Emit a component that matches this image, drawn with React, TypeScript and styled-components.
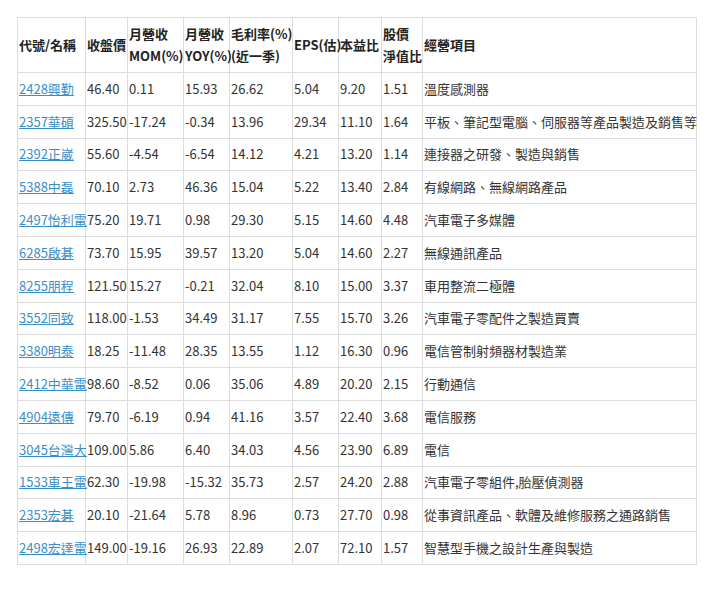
import styled, { createGlobalStyle } from "styled-components";

const GlobalStyle = createGlobalStyle`
  body {
    margin: 0;
    background: #fff;
    font-family: "Noto Sans CJK TC", "Noto Sans", sans-serif;
    font-size: 13px;
    color: #333;
  }
`;

const Page = styled.div`
  padding: 17px 0 0 17px;
`;

const Table = styled.table`
  border-collapse: collapse;
  table-layout: fixed;
  width: 679px;
`;

const HeadCell = styled.th`
  border: 1px solid #ddd;
  padding: 0 1px;
  height: 54px;
  text-align: left;
  vertical-align: middle;
  font-weight: bold;
  color: #222;
  line-height: 22px;
  white-space: nowrap;
`;

const Cell = styled.td`
  border: 1px solid #ddd;
  padding: 0 1px;
  height: 31.8px;
  vertical-align: middle;
  white-space: nowrap;
  line-height: 18px;
`;

const StockLink = styled.a`
  color: #3a8fc9;
  text-decoration: underline;
`;

const widths = [68, 42, 56, 46, 63, 46, 43, 41, 274];

const headers: string[][] = [
  ["代號/名稱"],
  ["收盤價"],
  ["月營收", "MOM(%)"],
  ["月營收", "YOY(%)"],
  ["毛利率(%)", "(近一季)"],
  ["EPS(估)"],
  ["本益比"],
  ["股價", "淨值比"],
  ["經營項目"],
];

const rows: string[][] = [
  ["2428興勤", "46.40", "0.11", "15.93", "26.62", "5.04", "9.20", "1.51", "溫度感測器"],
  ["2357華碩", "325.50", "-17.24", "-0.34", "13.96", "29.34", "11.10", "1.64", "平板、筆記型電腦、伺服器等產品製造及銷售等"],
  ["2392正崴", "55.60", "-4.54", "-6.54", "14.12", "4.21", "13.20", "1.14", "連接器之研發、製造與銷售"],
  ["5388中磊", "70.10", "2.73", "46.36", "15.04", "5.22", "13.40", "2.84", "有線網路、無線網路產品"],
  ["2497怡利電", "75.20", "19.71", "0.98", "29.30", "5.15", "14.60", "4.48", "汽車電子多媒體"],
  ["6285啟碁", "73.70", "15.95", "39.57", "13.20", "5.04", "14.60", "2.27", "無線通訊產品"],
  ["8255朋程", "121.50", "15.27", "-0.21", "32.04", "8.10", "15.00", "3.37", "車用整流二極體"],
  ["3552同致", "118.00", "-1.53", "34.49", "31.17", "7.55", "15.70", "3.26", "汽車電子零配件之製造買賣"],
  ["3380明泰", "18.25", "-11.48", "28.35", "13.55", "1.12", "16.30", "0.96", "電信管制射頻器材製造業"],
  ["2412中華電", "98.60", "-8.52", "0.06", "35.06", "4.89", "20.20", "2.15", "行動通信"],
  ["4904遠傳", "79.70", "-6.19", "0.94", "41.16", "3.57", "22.40", "3.68", "電信服務"],
  ["3045台灣大", "109.00", "5.86", "6.40", "34.03", "4.56", "23.90", "6.89", "電信"],
  ["1533車王電", "62.30", "-19.98", "-15.32", "35.73", "2.57", "24.20", "2.88", "汽車電子零組件,胎壓偵測器"],
  ["2353宏碁", "20.10", "-21.64", "5.78", "8.96", "0.73", "27.70", "0.98", "從事資訊產品、軟體及維修服務之通路銷售"],
  ["2498宏達電", "149.00", "-19.16", "26.93", "22.89", "2.07", "72.10", "1.57", "智慧型手機之設計生產與製造"],
];

function App() {
  return (
    <Page>
      <GlobalStyle />
      <Table>
        <colgroup>
          {widths.map((w, i) => (
            <col key={i} style={{ width: w }} />
          ))}
        </colgroup>
        <thead>
          <tr>
            {headers.map((lines, i) => (
              <HeadCell key={i}>
                {lines.map((line, j) => (
                  <div key={j}>{line}</div>
                ))}
              </HeadCell>
            ))}
          </tr>
        </thead>
        <tbody>
          {rows.map((row) => (
            <tr key={row[0]}>
              {row.map((value, i) => (
                <Cell key={i}>
                  {i === 0 ? <StockLink href="#">{value}</StockLink> : value}
                </Cell>
              ))}
            </tr>
          ))}
        </tbody>
      </Table>
    </Page>
  );
}

export default App;
